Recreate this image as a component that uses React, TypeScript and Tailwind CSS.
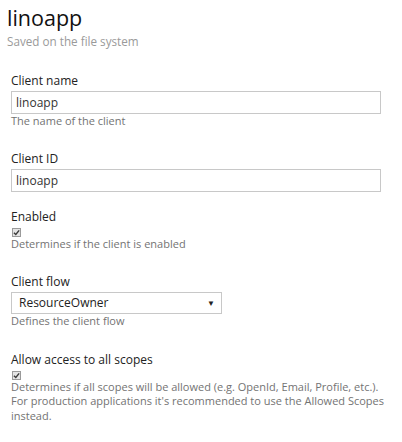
import React from "react";

function FakeCheckbox() {
  return (
    <div className="mt-[3px] flex h-[9px] w-[9px] items-center justify-center border border-[#9a9a9a] bg-[#e4e4e4] ml-[1px]">
      <svg viewBox="0 0 10 10" className="h-[7px] w-[7px]">
        <path d="M1.3 5.3 L4 7.8 L8.8 2" fill="none" stroke="#3a3a3a" strokeWidth="2" />
      </svg>
    </div>
  );
}

function Field({
  label,
  help,
  className,
  children,
}: {
  label: string;
  help?: React.ReactNode;
  className: string;
  children: React.ReactNode;
}) {
  return (
    <div className={className}>
      <label className="block text-[12px] leading-[16px] text-[#222]">{label}</label>
      {children}
      {help && <p className="text-[11px] leading-[14.5px] text-[#737373]">{help}</p>}
    </div>
  );
}

export default function App() {
  return (
    <div
      className="h-[442px] w-[402px] bg-white px-[7px] pt-[5px]"
      style={{ fontFamily: '"Open Sans", "Liberation Sans", sans-serif' }}
    >
      <h1 className="text-[21.5px] leading-[26px] text-[#111]">linoapp</h1>
      <p className="mt-[2px] text-[11.7px] leading-[16px] text-[#9a9a9a]">Saved on the file system</p>

      <div className="pl-[4px]">
        <Field className="mt-[24px]" label="Client name" help="The name of the client">
          <input
            readOnly
            value="linoapp"
            className="mt-[2px] block h-[23px] w-[370px] border border-[#c8c8c8] px-[4px] text-[12px] text-[#333] outline-none"
          />
        </Field>

        <Field className="mt-[22px]" label="Client ID">
          <input
            readOnly
            value="linoapp"
            className="mt-[2px] block h-[23px] w-[370px] border border-[#c8c8c8] px-[4px] text-[12px] text-[#333] outline-none"
          />
        </Field>

        <Field className="mt-[17px]" label="Enabled" help="Determines if the client is enabled">
          <FakeCheckbox />
        </Field>

        <Field className="mt-[23px]" label="Client flow" help="Defines the client flow">
          <div className="mt-[2px] flex h-[22px] w-[211px] items-center justify-between border border-[#c8c8c8] pl-[7px] pr-[6px] text-[12px] text-[#222]">
            <span>ResourceOwner</span>
            <span className="text-[8px]">▼</span>
          </div>
        </Field>

        <Field
          className="mt-[23px]"
          label="Allow access to all scopes"
          help={
            <>
              Determines if all scopes will be allowed (e.g. OpenId, Email, Profile, etc.).
              <br />
              For production applications it's recommended to use the Allowed Scopes instead.
            </>
          }
        >
          <FakeCheckbox />
        </Field>
      </div>
    </div>
  );
}
